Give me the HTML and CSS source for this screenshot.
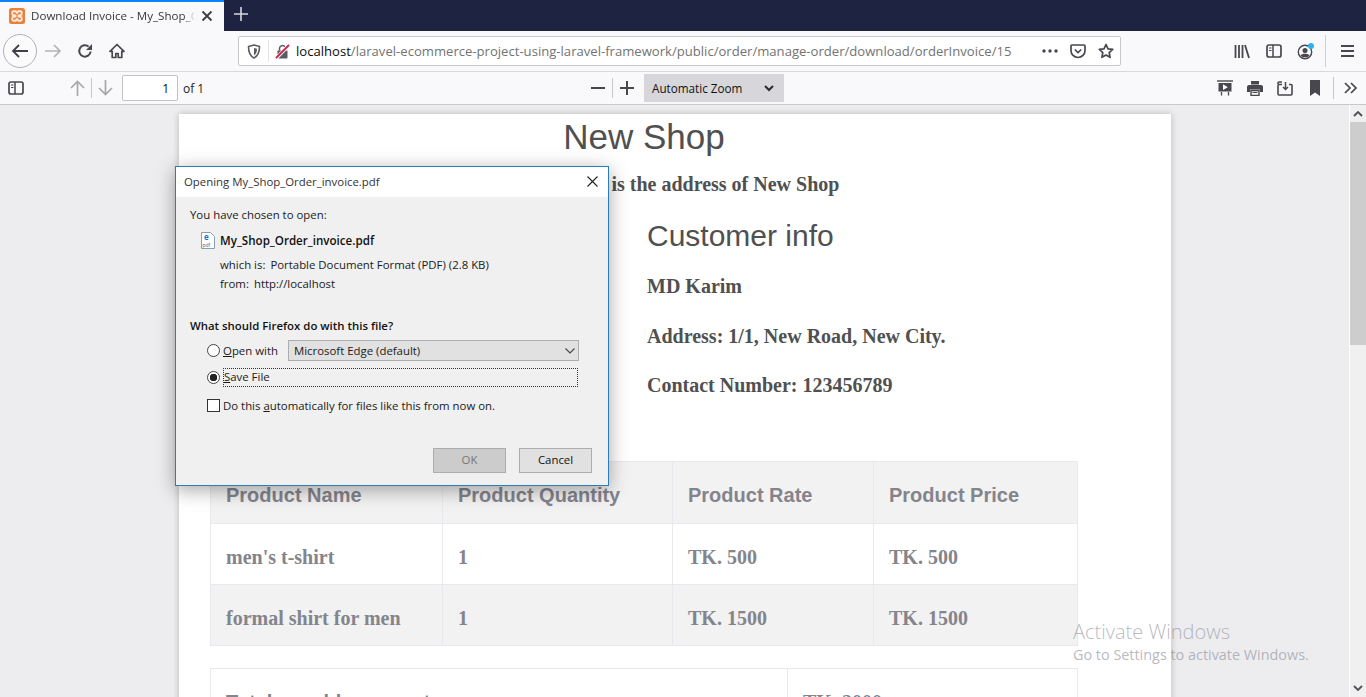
FILE: index.html
```html
<!DOCTYPE html>
<html lang="en">
<head>
<meta charset="utf-8">
<title>Download Invoice</title>
<link rel="stylesheet" href="styles.css">
</head>
<body>
<div class="browser">
  <div class="tabbar">
    <div class="tab">
      <svg class="favicon" width="16" height="16" viewBox="0 0 16 16"><rect x="0" y="0" width="16" height="16" rx="2.500" fill="#e8803a"/><path d="M4.500 3.300h2.200L8 5l1.300-1.700h2.200a1.200 1.200 0 0 1 1.200 1.200v1.500a1.200 1.200 0 0 1-1.200 1.200H10.200L9.400 8l.8.800h1.300a1.200 1.200 0 0 1 1.200 1.200v1.500a1.200 1.200 0 0 1-1.200 1.200H9.300L8 11l-1.300 1.700H4.500a1.200 1.200 0 0 1-1.200-1.200V10a1.200 1.200 0 0 1 1.200-1.200h1.300L6.600 8l-.8-.8H4.500a1.200 1.200 0 0 1-1.200-1.200V4.500a1.200 1.200 0 0 1 1.200-1.200z" fill="none" stroke="#fde9d8" stroke-width="1.900"/></svg>
      <span class="tab-title">Download Invoice - My_Shop_Order_invoice.pdf</span>
      <svg class="tab-close" width="12" height="12" viewBox="0 0 12 12"><path d="M1.500 1.500l9 9M10.500 1.500l-9 9" stroke="#3c3c44" stroke-width="1.800" fill="none"/></svg>
    </div>
    <svg class="newtab" width="14" height="14" viewBox="0 0 14 14"><path d="M7 0v14M0 7h14" stroke="#d8d8e0" stroke-width="1.600" fill="none"/></svg>
  </div>

  <div class="navbar">
    <div class="back-btn"><svg width="18" height="16" viewBox="0 0 18 16"><path d="M17 8H2M8 2L2 8l6 6" stroke="#3f3f45" stroke-width="1.800" fill="none"/></svg></div>
    <div class="nav-btn"><svg width="16" height="14" viewBox="0 0 16 14"><path d="M0 7h15M9 1l6 6-6 6" stroke="#b4b4b8" stroke-width="1.700" fill="none"/></svg></div>
    <div class="nav-btn"><svg width="16" height="16" viewBox="0 0 16 16"><path d="M13.600 8.500A5.700 5.700 0 1 1 11.600 3.600" stroke="#47474d" stroke-width="2" fill="none"/><path d="M15 1v6H9z" fill="#47474d"/></svg></div>
    <div class="nav-btn"><svg width="16" height="16" viewBox="0 0 16 16"><path d="M8 1.500L1 8.300h2.200V14.500h3.600v-4h2.400v4h3.600V8.300H15z" fill="none" stroke="#47474d" stroke-width="1.700" stroke-linejoin="round"/></svg></div>
    <div class="urlbar">
      <svg class="shield" width="14" height="15" viewBox="0 0 14 15"><path d="M7 1l5.500 1.500c0 6-1.500 9.500-5.500 11.500C3 12 1.500 8.500 1.500 2.500z" fill="none" stroke="#5b5b62" stroke-width="1.600" stroke-linejoin="round"/><path d="M7 4l3 .8C10 8 9 10 7 11.300z" fill="#5b5b62"/></svg>
      <span class="url-divider"></span>
      <svg class="lock" width="15" height="15" viewBox="0 0 15 15"><path d="M4.500 6.500V4.500a3 3 0 0 1 5.500-1.600" fill="none" stroke="#5b5b62" stroke-width="1.500"/><path d="M2.500 6.500h10v7a1 1 0 0 1-1 1h-8a1 1 0 0 1-1-1z" fill="#5b5b62"/><path d="M1 14.500L14 1" stroke="#fff" stroke-width="3.500"/><path d="M1 14L14 1" stroke="#d1214a" stroke-width="1.800"/></svg>
      <span class="url-text"><span class="url-host">localhost</span>/laravel-ecommerce-project-using-laravel-framework/public/order/manage-order/download/orderInvoice/15</span>
      <svg class="url-dots" width="16" height="4" viewBox="0 0 16 4"><circle cx="2" cy="2" r="1.700" fill="#47474d"/><circle cx="8" cy="2" r="1.700" fill="#47474d"/><circle cx="14" cy="2" r="1.700" fill="#47474d"/></svg>
      <svg class="url-pocket" width="16" height="15" viewBox="0 0 16 15"><path d="M2 1h12a1 1 0 0 1 1 1v4.500a7 7 0 0 1-14 0V2a1 1 0 0 1 1-1z" fill="none" stroke="#47474d" stroke-width="1.700"/><path d="M4.800 5.500L8 8.500l3.200-3" fill="none" stroke="#47474d" stroke-width="1.700"/></svg>
      <svg class="url-star" width="16" height="16" viewBox="0 0 16 16"><path d="M8 1.500l2 4.300 4.700.6-3.500 3.200.9 4.700L8 12l-4.100 2.300.9-4.700L1.300 6.400 6 5.800z" fill="none" stroke="#47474d" stroke-width="1.700" stroke-linejoin="round"/></svg>
    </div>
    <div class="nav-right">
      <div class="nav-btn"><svg width="16" height="15" viewBox="0 0 16 15"><path d="M1.500 1v13M5 1v13M8.500 1v13M11 1l4 13" stroke="#47474d" stroke-width="1.800" fill="none"/></svg></div>
      <div class="nav-btn"><svg width="16" height="14" viewBox="0 0 16 14"><rect x="1" y="1" width="14" height="12" rx="2" fill="none" stroke="#47474d" stroke-width="1.700"/><path d="M7 1v12" stroke="#47474d" stroke-width="1.500"/><path d="M3 4h2.500M3 6.500h2.500" stroke="#47474d" stroke-width="1.200"/></svg></div>
      <div class="nav-btn"><svg width="18" height="18" viewBox="0 0 18 18"><circle cx="8" cy="10" r="6.700" fill="none" stroke="#47474d" stroke-width="1.400"/><circle cx="8" cy="8.500" r="2.500" fill="#47474d"/><path d="M3.500 13.500c1-2.200 8-2.200 9 0l-2 1.800h-5z" fill="#47474d"/><circle cx="14" cy="4" r="3" fill="#2bb3ee"/></svg></div>
      <span class="nav-sep"></span>
      <div class="nav-btn"><svg width="13" height="12" viewBox="0 0 13 12"><path d="M0 1h13M0 6h13M0 11h13" stroke="#47474d" stroke-width="2" fill="none"/></svg></div>
    </div>
  </div>

  <div class="pdfbar">
    <div class="pdf-left">
      <div class="pdf-btn first"><svg width="16" height="14" viewBox="0 0 16 14"><rect x="1" y="1" width="14" height="12" rx="2" fill="none" stroke="#47474d" stroke-width="1.700"/><path d="M7 1v12" stroke="#47474d" stroke-width="1.500"/><path d="M3 4h2.500M3 6.500h2.500" stroke="#47474d" stroke-width="1.200"/></svg></div>
      <div class="pdf-btn up"><svg width="15" height="16" viewBox="0 0 15 16"><path d="M7.500 16V1.500M1 8l6.500-6.500L14 8" stroke="#a8a8ac" stroke-width="1.700" fill="none"/></svg></div>
      <span class="pdf-sep"></span>
      <div class="pdf-btn down"><svg width="15" height="16" viewBox="0 0 15 16"><path d="M7.500 0v14.500M1 8l6.500 6.500L14 8" stroke="#a8a8ac" stroke-width="1.700" fill="none"/></svg></div>
      <input class="page-input" type="text" value="1" aria-label="Page">
      <span class="page-of">of 1</span>
    </div>
    <div class="pdf-center">
      <div class="pdf-btn"><svg width="14" height="2" viewBox="0 0 14 2"><path d="M0 1h14" stroke="#47474d" stroke-width="2"/></svg></div>
      <span class="pdf-sep"></span>
      <div class="pdf-btn"><svg width="14" height="14" viewBox="0 0 14 14"><path d="M0 7h14M7 0v14" stroke="#47474d" stroke-width="2" fill="none"/></svg></div>
      <div class="zoom-select"><span>Automatic Zoom</span><svg width="10" height="7" viewBox="0 0 10 7"><path d="M1 1l4 4 4-4" stroke="#2c2c30" stroke-width="2" fill="none"/></svg></div>
    </div>
    <div class="pdf-right">
      <div class="pdf-btn wide"><svg width="16" height="16" viewBox="0 0 16 16"><path d="M0 1h16" stroke="#47474d" stroke-width="1.400"/><path d="M1.500 3h13v8.500h-13z" fill="#47474d"/><path d="M6 4.300v5.700l4.800-2.850z" fill="#fff"/><path d="M4.500 12v3.500M11.500 12v3.500" stroke="#47474d" stroke-width="1.300"/></svg></div>
      <div class="pdf-btn wide"><svg width="16" height="16" viewBox="0 0 16 16"><path d="M4 1h8v3.500H4z" fill="#47474d"/><path d="M2 5h12a2 2 0 0 1 2 2v5h-3V9.500H3V12H0V7a2 2 0 0 1 2-2z" fill="#47474d"/><path d="M4 10.500h8v5H4z" fill="none" stroke="#47474d" stroke-width="1.400"/><path d="M5.500 12.500h5" stroke="#47474d"/></svg></div>
      <div class="pdf-btn wide"><svg width="16" height="15" viewBox="0 0 16 15"><path d="M5 3.500H2a1 1 0 0 0-1 1V13a1 1 0 0 0 1 1h12a1 1 0 0 0 1-1V4.500a1 1 0 0 0-1-1h-2" fill="none" stroke="#47474d" stroke-width="1.600"/><path d="M1 3V2a1 1 0 0 1 1-1h3" fill="none" stroke="#47474d" stroke-width="1.600"/><path d="M8.500 1v7M6 6l2.500 2.500L11 6" fill="none" stroke="#47474d" stroke-width="1.500"/></svg></div>
      <div class="pdf-btn wide"><svg width="10" height="16" viewBox="0 0 10 16"><path d="M0 0h10v16l-5-3.500L0 16z" fill="#47474d"/></svg></div>
      <span class="pdf-sep tall"></span>
      <div class="pdf-btn last"><svg width="13" height="12" viewBox="0 0 13 12"><path d="M1 1l5 5-5 5M7 1l5 5-5 5" stroke="#47474d" stroke-width="1.700" fill="none"/></svg></div>
    </div>
  </div>

  <div class="viewer">
    <div class="canvas">
      <div class="page">
        <h1 class="shop-name">New Shop</h1>
        <p class="shop-address">This is the address of New Shop</p>
        <div class="info-row">
          <div class="info-col">
            <h2 class="info-title">Customer info</h2>
            <p class="info-line">MD Karim</p>
            <p class="info-line">Address: 1/1, New Road, New City.</p>
            <p class="info-line">Contact Number: 123456789</p>
          </div>
        </div>
        <table class="grid items">
          <colgroup><col class="c1"><col class="c2"><col class="c3"><col class="c4"></colgroup>
          <thead>
            <tr class="shade"><th>Product Name</th><th>Product Quantity</th><th>Product Rate</th><th>Product Price</th></tr>
          </thead>
          <tbody>
            <tr><td>men's t-shirt</td><td>1</td><td>TK. 500</td><td>TK. 500</td></tr>
            <tr class="shade"><td>formal shirt for men</td><td>1</td><td>TK. 1500</td><td>TK. 1500</td></tr>
          </tbody>
        </table>
        <table class="grid totals">
          <colgroup><col class="t1"><col class="t2"></colgroup>
          <tbody>
            <tr><th>Total payable amount</th><td>TK. 2000</td></tr>
          </tbody>
        </table>
      </div>
    </div>
    <div class="scrollbar">
      <svg class="sb-arrow" width="10" height="6" viewBox="0 0 10 6"><path d="M1 5l4-4 4 4" stroke="#505055" stroke-width="1.800" fill="none"/></svg>
      <div class="sb-thumb"></div>
      <svg class="sb-arrow end" width="10" height="6" viewBox="0 0 10 6"><path d="M1 1l4 4 4-4" stroke="#505055" stroke-width="1.800" fill="none"/></svg>
    </div>
  </div>

  <div class="dialog">
    <div class="dlg-title">
      <span>Opening My_Shop_Order_invoice.pdf</span>
      <svg width="11" height="11" viewBox="0 0 11 11"><path d="M.5.500l10 10M10.500.500l-10 10" stroke="#222" stroke-width="1.100" fill="none"/></svg>
    </div>
    <div class="dlg-body">
      <p class="dlg-chosen">You have chosen to open:</p>
      <div class="dlg-file">
        <svg width="14" height="17" viewBox="0 0 14 17"><path d="M.500.500h9l4 4v12H.500z" fill="#fff" stroke="#8b9bb0"/><text class="ico-e" x="3" y="8">e</text><text class="ico-pdf" x="1.500" y="14.500">pdf</text></svg>
        <strong>My_Shop_Order_invoice.pdf</strong>
      </div>
      <p class="dlg-meta type"><span class="meta-key">which is:</span><span class="meta-val">Portable Document Format (PDF) (2.8 KB)</span></p>
      <p class="dlg-meta from"><span class="meta-key">from:</span><span class="meta-val">http://localhost</span></p>
      <p class="dlg-question">What should Firefox do with this file?</p>
      <div class="dlg-option open">
        <input class="radio" type="radio" name="act" aria-label="Open with">
        <span class="opt-label"><u>O</u>pen with</span>
        <div class="app-select"><span>Microsoft Edge (default)</span><svg width="10" height="6" viewBox="0 0 10 6"><path d="M.5.500L5 5 9.500.500" stroke="#444" stroke-width="1.100" fill="none"/></svg></div>
      </div>
      <div class="dlg-option save">
        <input class="radio" type="radio" name="act" checked aria-label="Save File">
        <span class="opt-focus"><u>S</u>ave File</span>
      </div>
      <div class="dlg-option auto">
        <input class="check" type="checkbox" aria-label="Do this automatically">
        <span class="opt-label">Do this <u>a</u>utomatically for files like this from now on.</span>
      </div>
      <div class="dlg-buttons">
        <button class="btn disabled" type="button">OK</button>
        <button class="btn" type="button">Cancel</button>
      </div>
    </div>
  </div>

  <div class="watermark">
    <div class="wm-big">Activate Windows</div>
    <div class="wm-small">Go to Settings to activate Windows.</div>
  </div>
</div>
</body>
</html>
```

FILE: styles.css
```css
* { box-sizing: border-box; }
html, body { margin: 0; padding: 0; height: 100%; overflow: hidden; }
body { font-family: "Open Sans", "Noto Sans", sans-serif; color: #222; }
.browser { position: relative; width: 1366px; height: 697px; display: flex; flex-direction: column; overflow: hidden; background: #ededf0; }

/* tabs */
.tabbar { height: 31px; background: #1f2342; display: flex; align-items: flex-start; flex: none; }
.tab { width: 224px; height: 31px; background: #f9f9fb; border-top: 2px solid #0a84ff; display: flex; align-items: center; padding: 0 0 2px 9px; }
.favicon { flex: none; }
.tab-title { width: 164px; margin-left: 6px; font-size: 11.6px; color: #38383d; white-space: nowrap; overflow: hidden; -webkit-mask-image: linear-gradient(to right, #000 93%, transparent); mask-image: linear-gradient(to right, #000 93%, transparent); }
.tab-close { margin-left: 6px; flex: none; }
.newtab { margin: 7px 0 0 10px; }

/* navigation */
.navbar { height: 41px; flex: none; background: #f9f9fb; border-bottom: 1px solid #d8d8dc; display: flex; align-items: center; padding-left: 3px; }
.back-btn { width: 34px; height: 34px; border: 1px solid #b1b1b3; border-radius: 50%; background: #fbfbfc; display: flex; align-items: center; justify-content: center; flex: none; }
.nav-btn { width: 32px; height: 32px; display: flex; align-items: center; justify-content: center; flex: none; }
.urlbar { width: 883px; height: 30px; margin-left: 105px; background: #fff; border: 1px solid #c8c8cc; border-radius: 2px; display: flex; align-items: center; padding-left: 8px; flex: none; }
.urlbar svg { flex: none; }
.url-divider { width: 1px; height: 22px; background: #e4e4e6; margin: 0 6px 0 7px; }
.url-text { margin-left: 6px; width: 718px; font-size: 13.1px; color: #737373; white-space: nowrap; overflow: hidden; }
.url-host { color: #0c0c0d; }
.url-dots { margin-left: 28px; }
.url-pocket { margin-left: 12px; }
.url-star { margin-left: 12px; }
.nav-right { display: flex; align-items: center; margin-left: 105px; }
.nav-sep { width: 1px; height: 32px; background: #d0d0d4; margin: 0 5px 0 3px; }

/* pdf toolbar */
.pdfbar { height: 33px; flex: none; background: #f9f9fb; border-bottom: 1px solid #c9c9cd; display: flex; align-items: center; }
.pdf-left { width: 584px; display: flex; align-items: center; }
.pdf-center { width: 200px; display: flex; align-items: center; }
.pdf-right { margin-left: auto; display: flex; align-items: center; }
.pdf-btn { width: 28px; height: 26px; display: flex; align-items: center; justify-content: center; flex: none; }
.pdf-btn.first { width: 32px; }
.pdf-btn.up { margin-left: 31px; }
.pdf-btn.down { width: 27px; }
.pdf-btn.wide { width: 30px; }
.pdf-btn.last { width: 32px; }
.pdf-sep { width: 1px; height: 20px; background: #c8c8cc; flex: none; }
.pdf-sep.tall { height: 22px; margin-left: 3px; }
.page-input { width: 56px; height: 26px; margin-left: 3px; border: 1px solid #c2c2c6; border-radius: 2px; background: #fff; font: 12px "Open Sans", sans-serif; color: #0c0c0d; text-align: right; padding: 0 8px; }
.page-of { margin-left: 5px; font-size: 12px; color: #222; }
.zoom-select { width: 140px; height: 28px; margin-left: 3px; background: #d7d7db; display: flex; align-items: center; justify-content: space-between; padding: 0 10px 0 8px; font-size: 11.7px; color: #111; }

/* viewer */
.viewer { flex: 1; min-height: 0; display: flex; }
.canvas { flex: 1; min-width: 0; overflow: hidden; background: #ededf0; padding: 9px 0 0 179px; }
.page { width: 992px; height: 700px; background: #fff; box-shadow: 0 0 7px rgba(0, 0, 0, .22); padding: 0 93px 0 31px; color: #505050; }
.shop-name { margin: 0; padding-top: 1px; height: 45px; font: 400 35px/44px "Liberation Sans", Arial, sans-serif; text-align: center; }
.shop-address { margin: 13px 0 0; padding-left: 120px; font: 700 20px/24px "Liberation Serif", "Times New Roman", serif; text-align: center; }
.info-row { padding-left: 437px; }
.info-title { margin: 22px 0 0; font: 400 30px/36px "Liberation Sans", Arial, sans-serif; }
.info-line { margin: 23.5px 0 0; font: 700 20px/26px "Liberation Serif", "Times New Roman", serif; }
.info-title + .info-line { margin-top: 19px; }

/* tables */
.grid { width: 867px; table-layout: fixed; border-collapse: collapse; color: #84848c; }
.grid th, .grid td { border: 1px solid #e8e8ee; padding: 5px 15px 0; text-align: left; vertical-align: middle; }
.grid th { font: 700 20px/24px "Liberation Sans", Arial, sans-serif; }
.grid td { font: 700 20px/24px "Liberation Serif", "Times New Roman", serif; }
.items { margin-top: 63px; }
.items tr { height: 61px; }
.items thead tr { height: 62px; }
.shade { background: #f2f2f3; }
.c1 { width: 232px; } .c2 { width: 230px; } .c3 { width: 201px; } .c4 { width: 204px; }
.totals { margin-top: 22px; }
.totals tr { height: 61px; }
.t1 { width: 577px; } .t2 { width: 290px; }

/* scrollbar */
.scrollbar { width: 17px; flex: none; background: #f0f0f0; border-left: 1px solid #fff; display: flex; flex-direction: column; align-items: center; }
.sb-arrow { margin-top: 6px; flex: none; }
.sb-thumb { width: 16px; height: 223px; margin-top: 5px; background: #cdcdcd; flex: none; }
.sb-arrow.end { margin-top: auto; margin-bottom: 6px; }

/* dialog */
.dialog { position: absolute; left: 175px; top: 166px; width: 434px; height: 320px; border: 1px solid #2b7cb8; background: #f0f0f0; box-shadow: 0 4px 18px rgba(0, 0, 0, .35); font-size: 11.4px; color: #1a1a1a; }
.dlg-title { height: 30px; background: #fff; display: flex; align-items: center; justify-content: space-between; padding: 0 10px 2px 8px; font-size: 11.4px; color: #333; }
.dlg-body { padding: 0 16px 0 14px; }
.dlg-body p { margin: 0; }
.dlg-body .dlg-chosen { padding-top: 10px; line-height: 16px; }
.dlg-file { display: flex; align-items: center; height: 18px; margin: 8px 0 0 11px; }
.dlg-file strong { margin-left: 5px; font-size: 11.6px; font-weight: 600; color: #111; }
.ico-e { font: 700 8px "Open Sans", sans-serif; fill: #1e74c8; }
.ico-pdf { font: 400 5px "Open Sans", sans-serif; fill: #555; }
.dlg-body .dlg-meta { display: flex; margin-left: 30px; line-height: 16px; }
.meta-key { margin-right: 5px; }
.dlg-body .type { margin-top: 8px; }
.dlg-body .from { margin-top: 3px; }
.dlg-body .dlg-question { margin-top: 26px; font-weight: 600; color: #111; line-height: 16px; }
.dlg-option { display: flex; align-items: center; margin-left: 17px; }
.open { margin-top: 6px; height: 21px; }
.save { margin-top: 7px; height: 19px; }
.auto { margin-top: 10px; height: 16px; }
.radio { appearance: none; width: 13px; height: 13px; margin: 0 3px 0 0; border: 1px solid #444; border-radius: 50%; background: #fff; flex: none; }
.radio:checked { background: radial-gradient(circle, #222 0 3.5px, #fff 4px); }
.check { appearance: none; width: 13px; height: 13px; margin: 0 3px 0 0; border: 1px solid #333; background: #fff; flex: none; }
.opt-label { white-space: nowrap; }
.open .opt-label { width: 65px; }
.app-select { width: 291px; height: 21px; background: #e1e1e1; border: 1px solid #adadad; display: flex; align-items: center; justify-content: space-between; padding: 0 3px 0 5px; }
.opt-focus { width: 355px; height: 19px; border: 1px dotted #333; line-height: 16px; }
.dlg-buttons { display: flex; justify-content: flex-end; gap: 13px; margin-top: 35px; }
.btn { width: 73px; height: 25px; background: #e1e1e1; border: 1px solid #adadad; font: 11.4px "Open Sans", sans-serif; color: #111; padding: 0 0 2px; }
.btn.disabled { background: #cccccc; color: #787878; }

/* watermark */
.watermark { position: absolute; left: 1073px; top: 620px; color: rgba(140, 140, 150, .62); pointer-events: none; }
.wm-big { font-size: 20px; line-height: 24px; font-weight: 300; }
.wm-small { margin-top: 1px; font-size: 14.4px; line-height: 20px; }
```
